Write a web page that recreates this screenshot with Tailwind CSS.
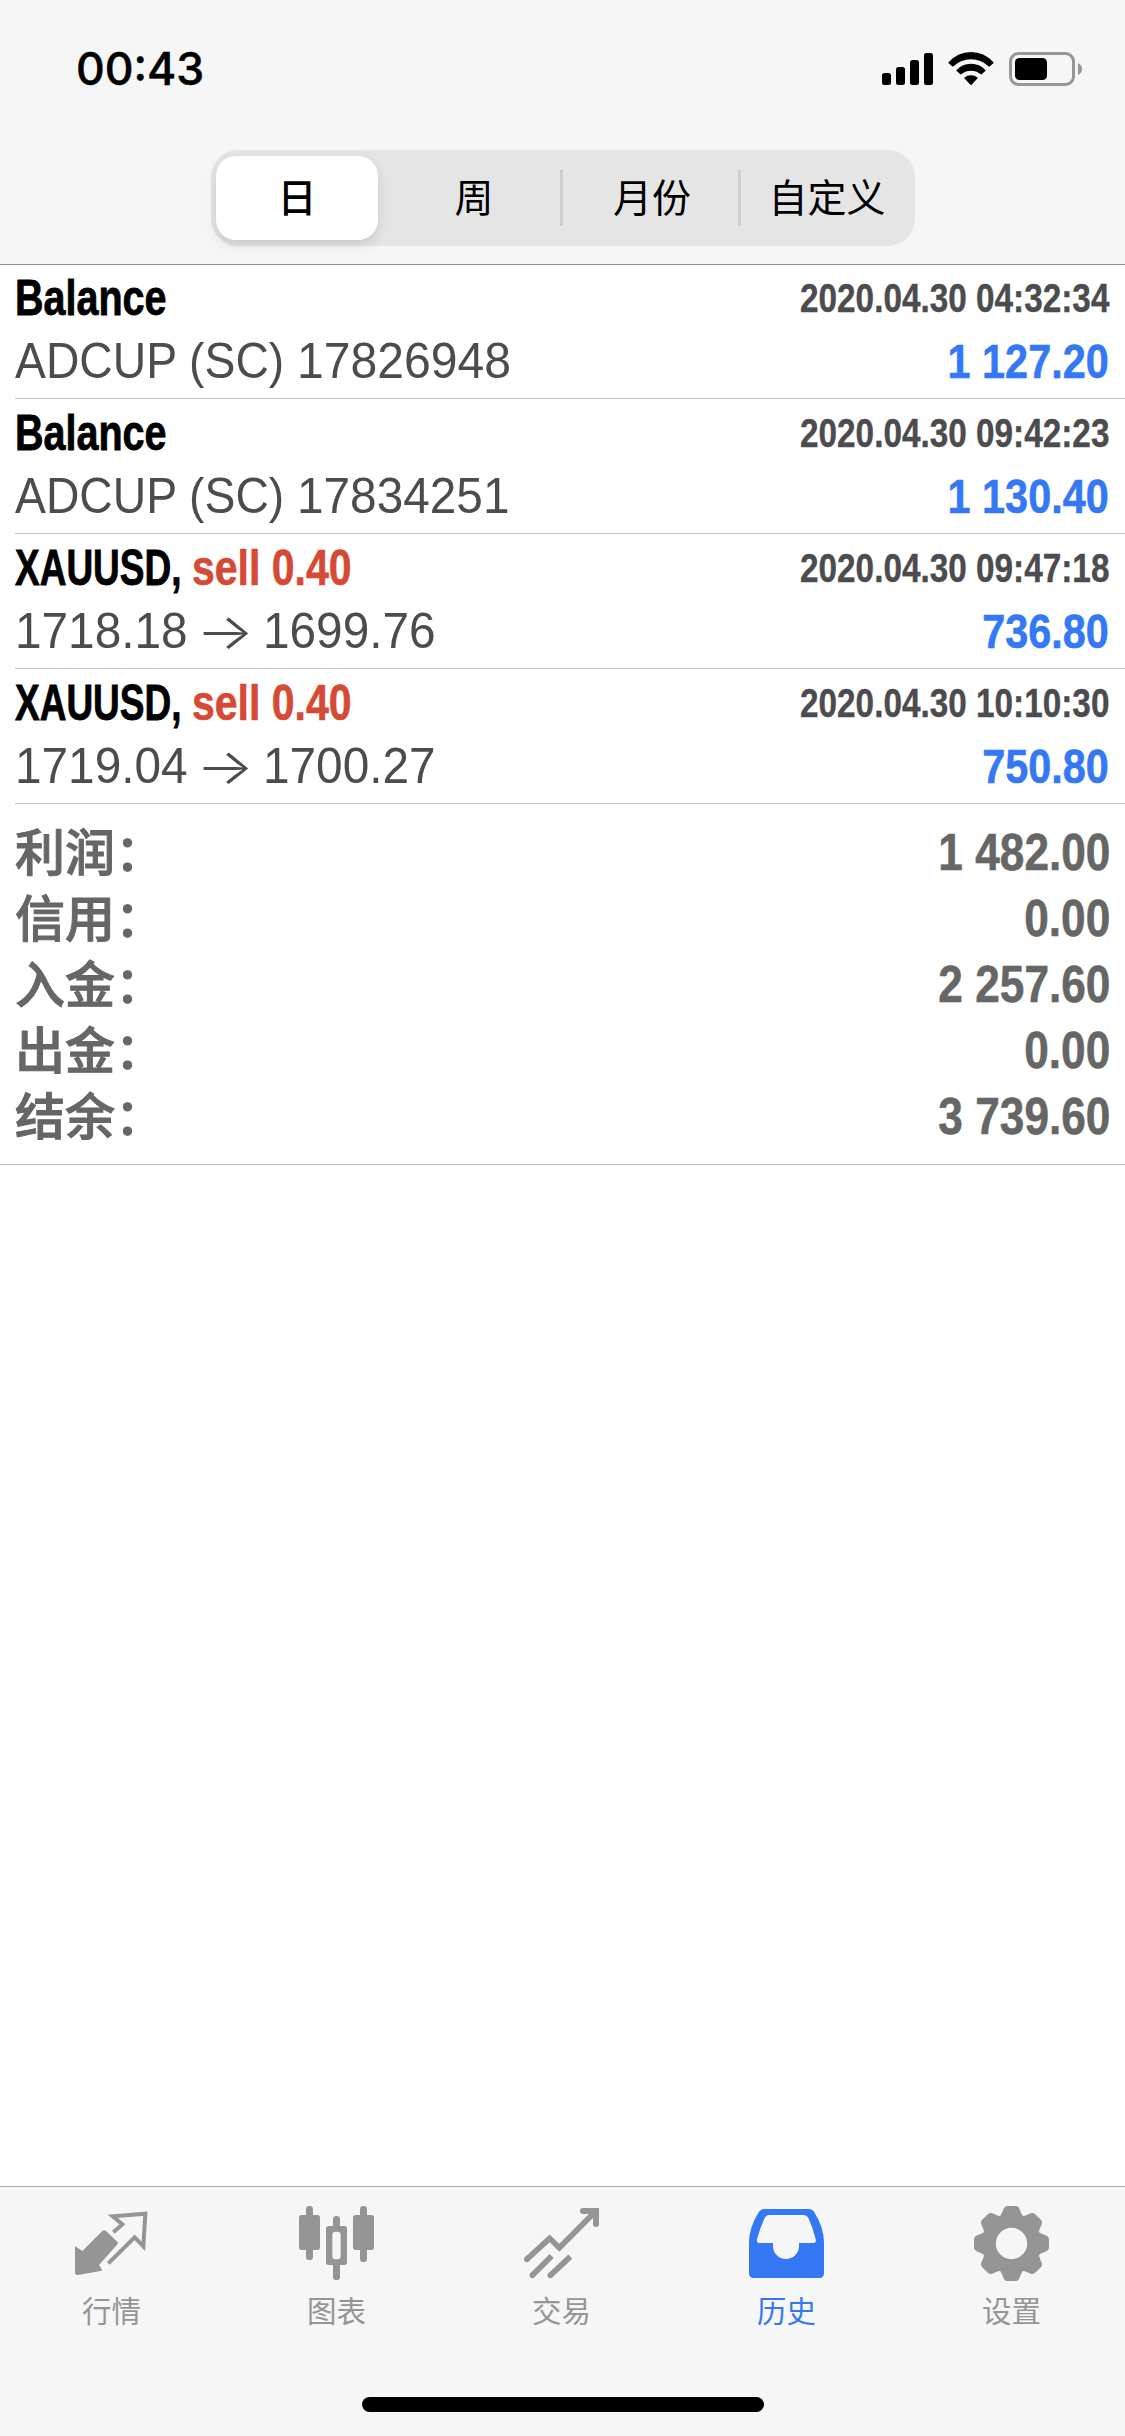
<!DOCTYPE html>
<html lang="zh-CN">
<head>
  <meta charset="utf-8" />
  <meta name="viewport" content="width=device-width, initial-scale=1" />
  <title>历史</title>
  <script src="https://cdn.jsdelivr.net/npm/@tailwindcss/browser@4"></script>
</head>
<body class="bg-white font-['Liberation_Sans','Noto_Sans_CJK_SC',sans-serif]">
  <div class="w-[1125px] h-[2436px] flex flex-col overflow-hidden">

    <!-- Header -->
    <header class="h-[265px] shrink-0 bg-[#f6f6f6] border-b border-[#8c8c8e]">
      <!-- Status bar -->
      <div class="h-[150px] pt-[39px] pl-[76px] pr-[43px] flex justify-between items-start">
        <span class="inline-block font-['Inter',sans-serif] font-medium text-[45px] leading-[60px] text-black origin-left scale-x-[0.99] [-webkit-text-stroke:0.5px]">00:43</span>
        <div class="flex pt-[13px]">
          <svg class="w-[51px] h-[34px]" viewBox="0 0 51 34">
            <rect x="0" y="21" width="9" height="12" rx="2.5" />
            <rect x="14" y="15" width="9" height="18" rx="2.5" />
            <rect x="28" y="8" width="9" height="25" rx="2.5" />
            <rect x="42" y="1" width="9" height="32" rx="2.5" />
          </svg>
          <svg class="w-[46px] h-[34px] ml-[15px]" viewBox="0 0 46 34">
            <path d="M0.6 10.2Q10 0 23 0Q36 0 45.4 10.2Q45.8 10.8 45.3 11.3L41.6 14.4Q41 14.8 40.4 14.2Q33 7.2 23 7.2Q13 7.2 5.6 14.2Q5 14.8 4.4 14.4L0.7 11.3Q0.2 10.8 0.6 10.2Z" />
            <path d="M8.6 18Q14.5 11.7 23 11.7Q31.5 11.7 37.4 18Q37.8 18.5 37.3 19L33.7 22.2Q33.1 22.6 32.5 22.1Q28.5 18.7 23 18.7Q17.5 18.7 13.5 22.1Q12.9 22.6 12.3 22.2L8.7 19Q8.2 18.5 8.6 18Z" />
            <path d="M16.6 25.6Q19.2 23.2 23 23.2Q26.8 23.2 29.4 25.6Q29.8 26.1 29.4 26.6L23.6 32.7Q23 33.2 22.4 32.7L16.6 26.6Q16.2 26.1 16.6 25.6Z" />
          </svg>
          <svg class="w-[73px] h-[34px] ml-[15px]" viewBox="0 0 73 34">
            <rect x="1.5" y="1.5" width="63" height="31" rx="8" fill="none" stroke="#969696" stroke-width="3" />
            <rect x="6" y="6" width="32" height="22" rx="4.5" />
            <path d="M69 11Q73 13 73 17Q73 21 69 23Z" fill="#969696" />
          </svg>
        </div>
      </div>

      <!-- Period switch -->
      <div class="w-[704px] h-[96px] ml-[211px] p-[6px] pr-0 rounded-[27px] bg-[#e5e5e6] flex items-center font-['Noto_Sans_CJK_SC',sans-serif] text-[39px] leading-[56px] text-black text-center">
        <div class="w-[162px] h-[84px] -ml-px rounded-[20px] bg-white shadow-[0_5px_12px_rgba(0,0,0,0.12)] font-medium pt-[11px]">日</div>
        <div class="flex-1 ml-[7px] border-r-3 border-[#cdcdcf]"><div class="-mt-[3px] mb-[3px] pl-[3px]">周</div></div>
        <div class="flex-1 border-r-3 border-[#cdcdcf]"><div class="-mt-[3px] mb-[3px] pl-[3px]">月份</div></div>
        <div class="w-[174px]"><div class="-mt-[3px] mb-[3px] pr-[2px]">自定义</div></div>
      </div>
    </header>

    <main class="flex-1 -mt-px">
      <!-- Deals -->
      <ul class="pl-[15px]">
        <li class="h-[135px] pt-[3px] pr-[16px] border-b border-[#c4c4c6] whitespace-nowrap">
          <div class="h-[63px] leading-[63px] flex justify-between">
            <span class="font-bold text-[50px] text-black origin-left scale-x-[0.79] [-webkit-text-stroke:0.8px]">Balance</span>
            <span class="font-bold text-[40px] text-[#4c4c4e] origin-right scale-x-[0.833] [-webkit-text-stroke:0.4px]">2020.04.30 04:32:34</span>
          </div>
          <div class="h-[63px] leading-[63px] flex justify-between">
            <div class="flex text-[50px] text-[#4c4c4e]">
              <span class="w-[282px] origin-left scale-x-[0.926]">ADCUP (SC)</span>
              <span class="origin-left scale-x-[0.962]">17826948</span>
            </div>
            <span class="font-bold text-[49px] text-[#3478f6] origin-right scale-x-[0.845] [-webkit-text-stroke:0.6px]">1 127.20</span>
          </div>
        </li>
        <li class="h-[135px] pt-[3px] pr-[16px] border-b border-[#c4c4c6] whitespace-nowrap">
          <div class="h-[63px] leading-[63px] flex justify-between">
            <span class="font-bold text-[50px] text-black origin-left scale-x-[0.79] [-webkit-text-stroke:0.8px]">Balance</span>
            <span class="font-bold text-[40px] text-[#4c4c4e] origin-right scale-x-[0.833] [-webkit-text-stroke:0.4px]">2020.04.30 09:42:23</span>
          </div>
          <div class="h-[63px] leading-[63px] flex justify-between">
            <div class="flex text-[50px] text-[#4c4c4e]">
              <span class="w-[282px] origin-left scale-x-[0.926]">ADCUP (SC)</span>
              <span class="origin-left scale-x-[0.955]">17834251</span>
            </div>
            <span class="font-bold text-[49px] text-[#3478f6] origin-right scale-x-[0.845] [-webkit-text-stroke:0.6px]">1 130.40</span>
          </div>
        </li>
        <li class="h-[135px] pt-[3px] pr-[16px] border-b border-[#c4c4c6] whitespace-nowrap">
          <div class="h-[63px] leading-[63px] flex justify-between">
            <div class="flex font-bold text-[50px]">
              <span class="w-[177px] text-black origin-left scale-x-[0.74] [-webkit-text-stroke:0.8px]">XAUUSD,</span>
              <span class="text-[#d64a35] origin-left scale-x-[0.82] [-webkit-text-stroke:0.6px]">sell 0.40</span>
            </div>
            <span class="font-bold text-[40px] text-[#4c4c4e] origin-right scale-x-[0.833] [-webkit-text-stroke:0.4px]">2020.04.30 09:47:18</span>
          </div>
          <div class="h-[63px] leading-[63px] flex justify-between">
            <div class="flex text-[50px] text-[#4c4c4e]">
              <span class="w-[181px] origin-left scale-x-[0.955]">1718.18</span>
              <span class="w-[67px] font-['Inter',sans-serif] font-light origin-left scale-x-[1.22]">→</span>
              <span class="origin-left scale-x-[0.955]">1699.76</span>
            </div>
            <span class="font-bold text-[49px] text-[#3478f6] origin-right scale-x-[0.845] [-webkit-text-stroke:0.6px]">736.80</span>
          </div>
        </li>
        <li class="h-[135px] pt-[3px] pr-[16px] border-b border-[#c4c4c6] whitespace-nowrap">
          <div class="h-[63px] leading-[63px] flex justify-between">
            <div class="flex font-bold text-[50px]">
              <span class="w-[177px] text-black origin-left scale-x-[0.74] [-webkit-text-stroke:0.8px]">XAUUSD,</span>
              <span class="text-[#d64a35] origin-left scale-x-[0.82] [-webkit-text-stroke:0.6px]">sell 0.40</span>
            </div>
            <span class="font-bold text-[40px] text-[#4c4c4e] origin-right scale-x-[0.833] [-webkit-text-stroke:0.4px]">2020.04.30 10:10:30</span>
          </div>
          <div class="h-[63px] leading-[63px] flex justify-between">
            <div class="flex text-[50px] text-[#4c4c4e]">
              <span class="w-[181px] origin-left scale-x-[0.955]">1719.04</span>
              <span class="w-[67px] font-['Inter',sans-serif] font-light origin-left scale-x-[1.22]">→</span>
              <span class="origin-left scale-x-[0.955]">1700.27</span>
            </div>
            <span class="font-bold text-[49px] text-[#3478f6] origin-right scale-x-[0.845] [-webkit-text-stroke:0.6px]">750.80</span>
          </div>
        </li>
      </ul>

      <!-- Totals -->
      <div class="h-[361px] pt-[15px] px-[15px] border-b border-[#bdbdbf] text-[#666666] leading-[66px] whitespace-nowrap">
        <div class="h-[66px] flex justify-between">
          <span class="font-['Noto_Sans_CJK_SC',sans-serif] font-medium text-[50px] -mt-[3px] [-webkit-text-stroke:1px]">利润：</span>
          <span class="font-bold text-[52px] origin-right scale-x-[0.85] [-webkit-text-stroke:0.6px]">1 482.00</span>
        </div>
        <div class="h-[66px] flex justify-between">
          <span class="font-['Noto_Sans_CJK_SC',sans-serif] font-medium text-[50px] -mt-[3px] [-webkit-text-stroke:1px]">信用：</span>
          <span class="font-bold text-[52px] origin-right scale-x-[0.85] [-webkit-text-stroke:0.6px]">0.00</span>
        </div>
        <div class="h-[66px] flex justify-between">
          <span class="font-['Noto_Sans_CJK_SC',sans-serif] font-medium text-[50px] -mt-[3px] [-webkit-text-stroke:1px]">入金：</span>
          <span class="font-bold text-[52px] origin-right scale-x-[0.85] [-webkit-text-stroke:0.6px]">2 257.60</span>
        </div>
        <div class="h-[66px] flex justify-between">
          <span class="font-['Noto_Sans_CJK_SC',sans-serif] font-medium text-[50px] -mt-[3px] [-webkit-text-stroke:1px]">出金：</span>
          <span class="font-bold text-[52px] origin-right scale-x-[0.85] [-webkit-text-stroke:0.6px]">0.00</span>
        </div>
        <div class="h-[66px] flex justify-between">
          <span class="font-['Noto_Sans_CJK_SC',sans-serif] font-medium text-[50px] -mt-[3px] [-webkit-text-stroke:1px]">结余：</span>
          <span class="font-bold text-[52px] origin-right scale-x-[0.85] [-webkit-text-stroke:0.6px]">3 739.60</span>
        </div>
      </div>
    </main>

    <!-- Tab bar -->
    <footer class="h-[250px] shrink-0 bg-[#f6f6f6] border-t border-[#acacae] flex flex-col items-center">
      <nav class="w-full h-[210px] pt-[19px] -ml-[2px] grid grid-cols-5 font-['Noto_Sans_CJK_SC',sans-serif] text-[29.5px] leading-[44px] text-[#959595]">
        <a class="flex flex-col items-center gap-[6px]">
          <svg class="w-[75px] h-[75px]" viewBox="0 0 225 225">
            <path d="M6 122L25 135L84 76Q90 70 96 75L130 107Q134 111 129 116L75 177L83 188Q86 194 80 195L12 207Q3 208 3 199V124Q3 119 6 122Z" fill="currentColor" />
            <path d="M118 79L145 55L116 31L214 23L208 121L182 94L103 172" fill="none" stroke="currentColor" stroke-width="12" />
          </svg>
          <span>行情</span>
        </a>
        <a class="flex flex-col items-center gap-[6px]">
          <svg class="w-[75px] h-[75px]" viewBox="0 0 225 225" fill="currentColor">
            <rect x="21" y="0" width="21" height="162" rx="10" />
            <rect x="0" y="27" width="63" height="105" rx="8" />
            <rect x="102" y="30" width="21" height="192" rx="10" />
            <rect x="81" y="60" width="63" height="117" rx="8" />
            <rect x="100" y="77" width="25" height="83" rx="10" fill="#f6f6f6" />
            <rect x="183" y="0" width="21" height="168" rx="10" />
            <rect x="162" y="27" width="63" height="105" rx="8" />
          </svg>
          <span>图表</span>
        </a>
        <a class="flex flex-col items-center gap-[6px]">
          <svg class="w-[75px] h-[75px]" viewBox="0 0 225 225" fill="none" stroke="currentColor" stroke-width="17">
            <path d="M8 160L77 97L106 125L212 19" />
            <path d="M177 15H216V54" stroke-width="18" stroke-linecap="round" />
            <path d="M25 208L83 150M79 208L139 152" />
            <g fill="currentColor" stroke="none">
              <circle cx="8.5" cy="160" r="8.5" />
              <circle cx="25" cy="208" r="8.5" />
              <circle cx="79" cy="208" r="8.5" />
            </g>
          </svg>
          <span>交易</span>
        </a>
        <a class="flex flex-col items-center gap-[6px] text-[#3478f6]">
          <svg class="w-[75px] h-[75px]" viewBox="0 0 225 225" fill="currentColor">
            <path fill-rule="evenodd" d="M46 9H179Q190 9 196 19Q225 65 225 110V202Q225 216 211 216H14Q0 216 0 202V110Q0 65 29 19Q35 9 46 9ZM62 27Q51 27 47 36Q33 65 24 100Q22 111 32 111H72V120A39 39 0 0 0 150 120V111H192Q203 111 200 100Q192 65 178 36Q173 27 163 27Z" />
          </svg>
          <span>历史</span>
        </a>
        <a class="flex flex-col items-center gap-[6px]">
          <svg class="w-[75px] h-[75px]" viewBox="-112.5 -112.5 225 225">
            <defs>
              <path id="tooth" d="M-37 -79Q-30 -86 -26 -98Q-22 -112.5 -12 -112.5H12Q22 -112.5 26 -98Q30 -86 37 -79Z" />
            </defs>
            <g fill="currentColor">
              <use href="#tooth" />
              <use href="#tooth" transform="rotate(45)" />
              <use href="#tooth" transform="rotate(90)" />
              <use href="#tooth" transform="rotate(135)" />
              <use href="#tooth" transform="rotate(180)" />
              <use href="#tooth" transform="rotate(225)" />
              <use href="#tooth" transform="rotate(270)" />
              <use href="#tooth" transform="rotate(315)" />
            </g>
            <circle r="67" fill="none" stroke="currentColor" stroke-width="40" />
          </svg>
          <span>设置</span>
        </a>
      </nav>
      <div class="w-[402px] h-[15px] rounded-full bg-black"></div>
    </footer>
  </div>
</body>
</html>
